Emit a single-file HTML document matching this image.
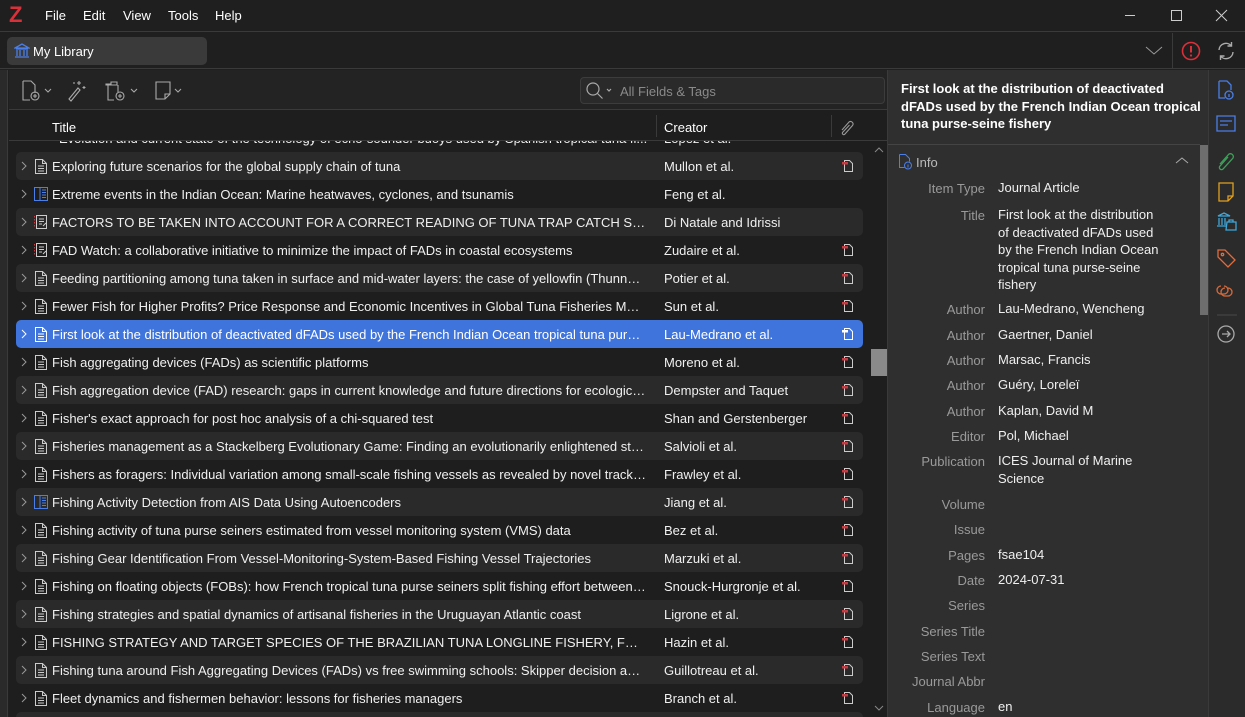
<!DOCTYPE html>
<html style="overflow:hidden;width:1245px;height:717px"><head><meta charset="utf-8"><style>
*{box-sizing:border-box;margin:0;padding:0}
body{width:1245px;height:717px;overflow:hidden;background:#1f1f1f;font-family:"Liberation Sans","DejaVu Sans",sans-serif;font-size:13px;color:#e8e8e8;position:relative}
.abs{position:absolute}
.menu span{position:absolute;top:8px;font-size:13px;color:#fff}
.row{position:absolute;left:16px;width:847px;height:28px;border-radius:5px}
.row.alt{background:#2a2a2a}
.row.sel{background:#3f74dc}
.row .chev{position:absolute;left:4px;top:9px}
.row .ic{position:absolute;left:17px;top:6px}
.row .t{position:absolute;left:36px;top:7px;width:594px;white-space:nowrap;overflow:hidden;text-overflow:ellipsis;color:#f0f0f0}
.row .c{position:absolute;left:648px;top:7px;white-space:nowrap;color:#f0f0f0}
.row .a{position:absolute;left:825px;top:7px}
.lab{position:absolute;right:260px;color:#9a9a9a;text-align:right;white-space:nowrap}
.val{position:absolute;left:998px;color:#f0f0f0;white-space:nowrap;line-height:17.5px}
</style></head><body>
<!-- title bar -->
<div class="abs" style="left:0;top:0;width:1245px;height:32px;background:#1f1f1f;border-bottom:1px solid #3a3a3a"></div>
<div class="abs" style="left:9px;top:2px;font-size:22px;font-weight:bold;color:#d9303a">Z</div>
<div class="menu"><span style="left:45px">File</span><span style="left:83px">Edit</span><span style="left:123px">View</span><span style="left:168px">Tools</span><span style="left:215px">Help</span></div>
<svg class="abs" style="left:1120px;top:8px" width="110" height="16"><line x1="5" y1="7.5" x2="15" y2="7.5" stroke="#ccc"/><rect x="51.5" y="2.5" width="10" height="10" fill="none" stroke="#ccc"/><path d="M96 2l11 11M107 2l-11 11" stroke="#ccc"/></svg>
<!-- library bar -->
<div class="abs" style="left:0;top:33px;width:1245px;height:36px;background:#1f1f1f;border-bottom:1px solid #3a3a3a"></div>
<div class="abs" style="left:7px;top:37px;width:200px;height:28px;background:#3a3a3a;border-radius:5px"></div>
<svg class="abs" style="left:14px;top:43px" width="16" height="16"><path d="M1 5L8 1l7 4zM2 6h12M3 7v6M6 7v6M10 7v6M13 7v6M1 14h14" stroke="#4a7ee8" fill="none" stroke-width="1.3"/></svg>
<div class="abs" style="left:33px;top:44px;color:#fff">My Library</div>
<svg class="abs" style="left:1145px;top:45px" width="18" height="12"><path d="M1 2l8 7 8-7" stroke="#999" fill="none"/></svg>
<div class="abs" style="left:1172px;top:33px;width:1px;height:36px;background:#3a3a3a"></div>
<svg class="abs" style="left:1180px;top:40px" width="22" height="22"><circle cx="11" cy="11" r="8.5" stroke="#d9303a" stroke-width="1.6" fill="none"/><line x1="11" y1="6" x2="11" y2="12.5" stroke="#d9303a" stroke-width="2"/><circle cx="11" cy="15.5" r="1.1" fill="#d9303a"/></svg>
<svg class="abs" style="left:1216px;top:41px" width="20" height="20"><path d="M3 9a7 7 0 0 1 12.5-4M17 11a7 7 0 0 1-12.5 4M15.5 1v4h-4M4.5 19v-4h4" stroke="#aaa" fill="none" stroke-width="1.4"/></svg>
<!-- left strip -->
<div class="abs" style="left:0;top:70px;width:8px;height:647px;background:#2a2a2a;border-right:1px solid #3a3a3a"></div>
<!-- list panel -->
<div class="abs" style="left:9px;top:70px;width:878px;height:647px;background:#1e1e1e"></div>
<div class="abs" style="left:9px;top:70px;width:878px;height:40px;background:#232323;border-bottom:1px solid #3a3a3a"></div>
<svg class="abs" style="left:20px;top:79px" width="170" height="24" fill="none" stroke="#aaa" stroke-width="1.1">
<path d="M3 2h8l4 4v8M3 2v19h7"/><circle cx="15" cy="17" r="4"/><path d="M15 15v4M13 17h4"/><path d="M25 10l3 3 3-3"/>
<path d="M49 20l9-11 2 2-9 11zM59 2v4M57 4h4M64 7v3M62.5 8.5h3M54 3v2"/>
<path d="M86 5h5v-2h6v3h-11zM88 6v15h6M98 6v7"/><circle cx="100" cy="17" r="4"/><path d="M100 15v4M98 17h4"/><path d="M111 10l3 3 3-3"/>
<path d="M136 3h14v12l-5 5h-9zM145 20v-5h5"/><path d="M155 10l3 3 3-3"/></svg>
<div class="abs" style="left:580px;top:77px;width:305px;height:27px;background:#2a2a2a;border:1px solid #3c3c3c;border-radius:4px"></div>
<svg class="abs" style="left:585px;top:81px" width="30" height="20" fill="none" stroke="#aaa" stroke-width="1.2"><circle cx="8" cy="8" r="6"/><path d="M12.5 12.5l5 5M22 8l2 2 2-2"/></svg>
<div class="abs" style="left:620px;top:84px;color:#8a8a8a">All Fields &amp; Tags</div>
<!-- header -->
<div class="abs" style="left:9px;top:111px;width:878px;height:30px;background:#1e1e1e;border-bottom:1px solid #3a3a3a"></div>
<div class="abs" style="left:52px;top:120px;color:#fff">Title</div>
<div class="abs" style="left:656px;top:115px;width:1px;height:22px;background:#3a3a3a"></div>
<div class="abs" style="left:664px;top:120px;color:#fff">Creator</div>
<div class="abs" style="left:831px;top:115px;width:1px;height:22px;background:#3a3a3a"></div>
<svg class="abs" style="left:838px;top:118px" width="18" height="18"><path d="M4 12l7-8a2.5 2.5 0 0 1 3.5 3.5l-8 9a1.5 1.5 0 0 1-2-2l7-7.5" stroke="#999" fill="none" stroke-width="1.1"/></svg>
<!-- list rows -->
<div class="abs" style="left:9px;top:141px;width:861px;height:576px;overflow:hidden">
<div style="position:absolute;left:0;top:-17px;width:861px">
<div class="row" style="top:0;left:7px"><div class="t" style="left:43px;top:7px">Evolution and current state of the technology of echo-sounder buoys used by Spanish tropical tuna fi...</div><div class="c">López et al.</div></div>
</div>
</div>
<div class="abs" style="left:0;top:0;width:1245px;height:717px;overflow:hidden">
<div class="row alt" style="top:152px"><svg class="chev" width="8" height="10"><path d="M2 1l4 4-4 4" stroke="#999" fill="none"/></svg><svg class="ic" width="16" height="16"><path d="M2.5 1.5h7l4 4v10h-11zM9.5 1.5v4h4M5 8h6M5 10.5h6M5 13h6" stroke="#ccc" fill="none"/></svg><div class="t">Exploring future scenarios for the global supply chain of tuna</div><div class="c">Mullon et al.</div><svg class="a" width="14" height="14"><path d="M3.5 1.5h5l3 3v8h-8z" stroke="#ccc" fill="none"/><rect x="1" y="3" width="6" height="2.5" fill="#c73a42"/></svg></div>
<div class="row" style="top:180px"><svg class="chev" width="8" height="10"><path d="M2 1l4 4-4 4" stroke="#999" fill="none"/></svg><svg class="ic" width="16" height="16"><path d="M1.5 1.5h13v13h-13zM7 1.5v13M9 4h4M9 6.5h4M9 9h4M9 11.5h4" stroke="#4a7ee8" fill="none"/></svg><div class="t">Extreme events in the Indian Ocean: Marine heatwaves, cyclones, and tsunamis</div><div class="c">Feng et al.</div></div>
<div class="row alt" style="top:208px"><svg class="chev" width="8" height="10"><path d="M2 1l4 4-4 4" stroke="#999" fill="none"/></svg><svg class="ic" width="16" height="16"><path d="M3.5 1.5h10v13h-10zM6 5h5M6 7.5h5M6 10h3M10 12l3-3" stroke="#ccc" fill="none"/><path d="M1.5 2v12" stroke="#c73a42" stroke-dasharray="1.5 1.5"/></svg><div class="t">FACTORS TO BE TAKEN INTO ACCOUNT FOR A CORRECT READING OF TUNA TRAP CATCH SERIES</div><div class="c">Di Natale and Idrissi</div></div>
<div class="row" style="top:236px"><svg class="chev" width="8" height="10"><path d="M2 1l4 4-4 4" stroke="#999" fill="none"/></svg><svg class="ic" width="16" height="16"><path d="M3.5 1.5h10v13h-10zM6 5h5M6 7.5h5M6 10h3M10 12l3-3" stroke="#ccc" fill="none"/><path d="M1.5 2v12" stroke="#c73a42" stroke-dasharray="1.5 1.5"/></svg><div class="t">FAD Watch: a collaborative initiative to minimize the impact of FADs in coastal ecosystems</div><div class="c">Zudaire et al.</div><svg class="a" width="14" height="14"><path d="M3.5 1.5h5l3 3v8h-8z" stroke="#ccc" fill="none"/><rect x="1" y="3" width="6" height="2.5" fill="#c73a42"/></svg></div>
<div class="row alt" style="top:264px"><svg class="chev" width="8" height="10"><path d="M2 1l4 4-4 4" stroke="#999" fill="none"/></svg><svg class="ic" width="16" height="16"><path d="M2.5 1.5h7l4 4v10h-11zM9.5 1.5v4h4M5 8h6M5 10.5h6M5 13h6" stroke="#ccc" fill="none"/></svg><div class="t">Feeding partitioning among tuna taken in surface and mid-water layers: the case of yellowfin (Thunnus albacares)</div><div class="c">Potier et al.</div><svg class="a" width="14" height="14"><path d="M3.5 1.5h5l3 3v8h-8z" stroke="#ccc" fill="none"/><rect x="1" y="3" width="6" height="2.5" fill="#c73a42"/></svg></div>
<div class="row" style="top:292px"><svg class="chev" width="8" height="10"><path d="M2 1l4 4-4 4" stroke="#999" fill="none"/></svg><svg class="ic" width="16" height="16"><path d="M2.5 1.5h7l4 4v10h-11zM9.5 1.5v4h4M5 8h6M5 10.5h6M5 13h6" stroke="#ccc" fill="none"/></svg><div class="t">Fewer Fish for Higher Profits? Price Response and Economic Incentives in Global Tuna Fisheries Management</div><div class="c">Sun et al.</div><svg class="a" width="14" height="14"><path d="M3.5 1.5h5l3 3v8h-8z" stroke="#ccc" fill="none"/><rect x="1" y="3" width="6" height="2.5" fill="#c73a42"/></svg></div>
<div class="row sel" style="top:320px"><svg class="chev" width="8" height="10"><path d="M2 1l4 4-4 4" stroke="#fff" fill="none"/></svg><svg class="ic" width="16" height="16"><path d="M2.5 1.5h7l4 4v10h-11zM9.5 1.5v4h4M5 8h6M5 10.5h6M5 13h6" stroke="#fff" fill="none"/></svg><div class="t" style="color:#fff">First look at the distribution of deactivated dFADs used by the French Indian Ocean tropical tuna purse-seine fishery</div><div class="c" style="color:#fff">Lau-Medrano et al.</div><svg class="a" width="14" height="14"><path d="M3.5 1.5h5l3 3v8h-8z" stroke="#fff" fill="none"/><rect x="1" y="3" width="6" height="2.5" fill="#fff"/></svg></div>
<div class="row" style="top:348px"><svg class="chev" width="8" height="10"><path d="M2 1l4 4-4 4" stroke="#999" fill="none"/></svg><svg class="ic" width="16" height="16"><path d="M2.5 1.5h7l4 4v10h-11zM9.5 1.5v4h4M5 8h6M5 10.5h6M5 13h6" stroke="#ccc" fill="none"/></svg><div class="t">Fish aggregating devices (FADs) as scientific platforms</div><div class="c">Moreno et al.</div><svg class="a" width="14" height="14"><path d="M3.5 1.5h5l3 3v8h-8z" stroke="#ccc" fill="none"/><rect x="1" y="3" width="6" height="2.5" fill="#c73a42"/></svg></div>
<div class="row alt" style="top:376px"><svg class="chev" width="8" height="10"><path d="M2 1l4 4-4 4" stroke="#999" fill="none"/></svg><svg class="ic" width="16" height="16"><path d="M2.5 1.5h7l4 4v10h-11zM9.5 1.5v4h4M5 8h6M5 10.5h6M5 13h6" stroke="#ccc" fill="none"/></svg><div class="t">Fish aggregation device (FAD) research: gaps in current knowledge and future directions for ecological studies</div><div class="c">Dempster and Taquet</div><svg class="a" width="14" height="14"><path d="M3.5 1.5h5l3 3v8h-8z" stroke="#ccc" fill="none"/><rect x="1" y="3" width="6" height="2.5" fill="#c73a42"/></svg></div>
<div class="row" style="top:404px"><svg class="chev" width="8" height="10"><path d="M2 1l4 4-4 4" stroke="#999" fill="none"/></svg><svg class="ic" width="16" height="16"><path d="M2.5 1.5h7l4 4v10h-11zM9.5 1.5v4h4M5 8h6M5 10.5h6M5 13h6" stroke="#ccc" fill="none"/></svg><div class="t">Fisher's exact approach for post hoc analysis of a chi-squared test</div><div class="c">Shan and Gerstenberger</div><svg class="a" width="14" height="14"><path d="M3.5 1.5h5l3 3v8h-8z" stroke="#ccc" fill="none"/><rect x="1" y="3" width="6" height="2.5" fill="#c73a42"/></svg></div>
<div class="row alt" style="top:432px"><svg class="chev" width="8" height="10"><path d="M2 1l4 4-4 4" stroke="#999" fill="none"/></svg><svg class="ic" width="16" height="16"><path d="M2.5 1.5h7l4 4v10h-11zM9.5 1.5v4h4M5 8h6M5 10.5h6M5 13h6" stroke="#ccc" fill="none"/></svg><div class="t">Fisheries management as a Stackelberg Evolutionary Game: Finding an evolutionarily enlightened strategy</div><div class="c">Salvioli et al.</div><svg class="a" width="14" height="14"><path d="M3.5 1.5h5l3 3v8h-8z" stroke="#ccc" fill="none"/><rect x="1" y="3" width="6" height="2.5" fill="#c73a42"/></svg></div>
<div class="row" style="top:460px"><svg class="chev" width="8" height="10"><path d="M2 1l4 4-4 4" stroke="#999" fill="none"/></svg><svg class="ic" width="16" height="16"><path d="M2.5 1.5h7l4 4v10h-11zM9.5 1.5v4h4M5 8h6M5 10.5h6M5 13h6" stroke="#ccc" fill="none"/></svg><div class="t">Fishers as foragers: Individual variation among small-scale fishing vessels as revealed by novel tracking</div><div class="c">Frawley et al.</div><svg class="a" width="14" height="14"><path d="M3.5 1.5h5l3 3v8h-8z" stroke="#ccc" fill="none"/><rect x="1" y="3" width="6" height="2.5" fill="#c73a42"/></svg></div>
<div class="row alt" style="top:488px"><svg class="chev" width="8" height="10"><path d="M2 1l4 4-4 4" stroke="#999" fill="none"/></svg><svg class="ic" width="16" height="16"><path d="M1.5 1.5h13v13h-13zM7 1.5v13M9 4h4M9 6.5h4M9 9h4M9 11.5h4" stroke="#4a7ee8" fill="none"/></svg><div class="t">Fishing Activity Detection from AIS Data Using Autoencoders</div><div class="c">Jiang et al.</div><svg class="a" width="14" height="14"><path d="M3.5 1.5h5l3 3v8h-8z" stroke="#ccc" fill="none"/><rect x="1" y="3" width="6" height="2.5" fill="#c73a42"/></svg></div>
<div class="row" style="top:516px"><svg class="chev" width="8" height="10"><path d="M2 1l4 4-4 4" stroke="#999" fill="none"/></svg><svg class="ic" width="16" height="16"><path d="M2.5 1.5h7l4 4v10h-11zM9.5 1.5v4h4M5 8h6M5 10.5h6M5 13h6" stroke="#ccc" fill="none"/></svg><div class="t">Fishing activity of tuna purse seiners estimated from vessel monitoring system (VMS) data</div><div class="c">Bez et al.</div><svg class="a" width="14" height="14"><path d="M3.5 1.5h5l3 3v8h-8z" stroke="#ccc" fill="none"/><rect x="1" y="3" width="6" height="2.5" fill="#c73a42"/></svg></div>
<div class="row alt" style="top:544px"><svg class="chev" width="8" height="10"><path d="M2 1l4 4-4 4" stroke="#999" fill="none"/></svg><svg class="ic" width="16" height="16"><path d="M2.5 1.5h7l4 4v10h-11zM9.5 1.5v4h4M5 8h6M5 10.5h6M5 13h6" stroke="#ccc" fill="none"/></svg><div class="t">Fishing Gear Identification From Vessel-Monitoring-System-Based Fishing Vessel Trajectories</div><div class="c">Marzuki et al.</div><svg class="a" width="14" height="14"><path d="M3.5 1.5h5l3 3v8h-8z" stroke="#ccc" fill="none"/><rect x="1" y="3" width="6" height="2.5" fill="#c73a42"/></svg></div>
<div class="row" style="top:572px"><svg class="chev" width="8" height="10"><path d="M2 1l4 4-4 4" stroke="#999" fill="none"/></svg><svg class="ic" width="16" height="16"><path d="M2.5 1.5h7l4 4v10h-11zM9.5 1.5v4h4M5 8h6M5 10.5h6M5 13h6" stroke="#ccc" fill="none"/></svg><div class="t">Fishing on floating objects (FOBs): how French tropical tuna purse seiners split fishing effort between FOBs and free schools</div><div class="c">Snouck-Hurgronje et al.</div><svg class="a" width="14" height="14"><path d="M3.5 1.5h5l3 3v8h-8z" stroke="#ccc" fill="none"/><rect x="1" y="3" width="6" height="2.5" fill="#c73a42"/></svg></div>
<div class="row alt" style="top:600px"><svg class="chev" width="8" height="10"><path d="M2 1l4 4-4 4" stroke="#999" fill="none"/></svg><svg class="ic" width="16" height="16"><path d="M2.5 1.5h7l4 4v10h-11zM9.5 1.5v4h4M5 8h6M5 10.5h6M5 13h6" stroke="#ccc" fill="none"/></svg><div class="t">Fishing strategies and spatial dynamics of artisanal fisheries in the Uruguayan Atlantic coast</div><div class="c">Ligrone et al.</div><svg class="a" width="14" height="14"><path d="M3.5 1.5h5l3 3v8h-8z" stroke="#ccc" fill="none"/><rect x="1" y="3" width="6" height="2.5" fill="#c73a42"/></svg></div>
<div class="row" style="top:628px"><svg class="chev" width="8" height="10"><path d="M2 1l4 4-4 4" stroke="#999" fill="none"/></svg><svg class="ic" width="16" height="16"><path d="M2.5 1.5h7l4 4v10h-11zM9.5 1.5v4h4M5 8h6M5 10.5h6M5 13h6" stroke="#ccc" fill="none"/></svg><div class="t">FISHING STRATEGY AND TARGET SPECIES OF THE BRAZILIAN TUNA LONGLINE FISHERY, FROM 1978 TO 2012</div><div class="c">Hazin et al.</div><svg class="a" width="14" height="14"><path d="M3.5 1.5h5l3 3v8h-8z" stroke="#ccc" fill="none"/><rect x="1" y="3" width="6" height="2.5" fill="#c73a42"/></svg></div>
<div class="row alt" style="top:656px"><svg class="chev" width="8" height="10"><path d="M2 1l4 4-4 4" stroke="#999" fill="none"/></svg><svg class="ic" width="16" height="16"><path d="M2.5 1.5h7l4 4v10h-11zM9.5 1.5v4h4M5 8h6M5 10.5h6M5 13h6" stroke="#ccc" fill="none"/></svg><div class="t">Fishing tuna around Fish Aggregating Devices (FADs) vs free swimming schools: Skipper decision and other factors</div><div class="c">Guillotreau et al.</div><svg class="a" width="14" height="14"><path d="M3.5 1.5h5l3 3v8h-8z" stroke="#ccc" fill="none"/><rect x="1" y="3" width="6" height="2.5" fill="#c73a42"/></svg></div>
<div class="row" style="top:684px"><svg class="chev" width="8" height="10"><path d="M2 1l4 4-4 4" stroke="#999" fill="none"/></svg><svg class="ic" width="16" height="16"><path d="M2.5 1.5h7l4 4v10h-11zM9.5 1.5v4h4M5 8h6M5 10.5h6M5 13h6" stroke="#ccc" fill="none"/></svg><div class="t">Fleet dynamics and fishermen behavior: lessons for fisheries managers</div><div class="c">Branch et al.</div><svg class="a" width="14" height="14"><path d="M3.5 1.5h5l3 3v8h-8z" stroke="#ccc" fill="none"/><rect x="1" y="3" width="6" height="2.5" fill="#c73a42"/></svg></div>
<div class="row alt" style="top:712px;height:5px;border-radius:5px 5px 0 0"></div>
</div>
<!-- list scrollbar -->
<div class="abs" style="left:870px;top:141px;width:17px;height:576px;background:#1e1e1e"></div>
<svg class="abs" style="left:873px;top:146px" width="12" height="8"><path d="M2 6l4-4 4 4" stroke="#888" fill="none"/></svg>
<svg class="abs" style="left:873px;top:704px" width="12" height="8"><path d="M2 2l4 4 4-4" stroke="#888" fill="none"/></svg>
<div class="abs" style="left:871px;top:349px;width:17px;height:27px;background:#8a8a8a"></div>
<!-- item pane -->
<div class="abs" style="left:887px;top:70px;width:1px;height:647px;background:#3a3a3a"></div>
<div class="abs" style="left:888px;top:70px;width:320px;height:647px;background:#2f2f2f"></div>
<div class="abs" style="left:901px;top:80px;width:300px;color:#fff;font-weight:bold;line-height:17.5px;font-size:13px">First look at the distribution of deactivated dFADs used by the French Indian Ocean tropical tuna purse-seine fishery</div>
<div class="abs" style="left:888px;top:144px;width:312px;height:1px;background:#444"></div>
<svg class="abs" style="left:897px;top:153px" width="16" height="17"><path d="M2.5 1.5h6l4 4v3M2.5 1.5v13h5" stroke="#4a7ee8" fill="none"/><circle cx="11" cy="12.5" r="3.5" stroke="#4a7ee8" fill="none"/><path d="M11 11.5v3" stroke="#4a7ee8"/></svg>
<div class="abs" style="left:916px;top:155px;color:#bbb">Info</div>
<svg class="abs" style="left:1174px;top:156px" width="16" height="10"><path d="M2 7l6-5 6 5" stroke="#aaa" fill="none"/></svg>
<div class="abs" style="left:1199px;top:145px;width:9px;height:572px;background:#2f2f2f"></div>
<div class="abs" style="left:1200px;top:145px;width:8px;height:170px;background:#6e6e6e"></div>
<div class="lab" style="top:181px">Item Type</div><div class="val" style="top:179px">Journal Article</div>
<div class="lab" style="top:208px">Title</div><div class="val" style="top:206px;white-space:normal;width:168px">First look at the distribution of deactivated dFADs used by the French Indian Ocean tropical tuna purse-seine fishery</div>
<div class="lab" style="top:302px">Author</div><div class="val" style="top:300px">Lau-Medrano, Wencheng</div>
<div class="lab" style="top:328px">Author</div><div class="val" style="top:326px">Gaertner, Daniel</div>
<div class="lab" style="top:353px">Author</div><div class="val" style="top:351px">Marsac, Francis</div>
<div class="lab" style="top:378px">Author</div><div class="val" style="top:376px">Guéry, Loreleï</div>
<div class="lab" style="top:404px">Author</div><div class="val" style="top:402px">Kaplan, David M</div>
<div class="lab" style="top:429px">Editor</div><div class="val" style="top:427px">Pol, Michael</div>
<div class="lab" style="top:454px">Publication</div><div class="val" style="top:452px">ICES Journal of Marine<br>Science</div>
<div class="lab" style="top:497px">Volume</div>
<div class="lab" style="top:522px">Issue</div>
<div class="lab" style="top:548px">Pages</div><div class="val" style="top:546px">fsae104</div>
<div class="lab" style="top:573px">Date</div><div class="val" style="top:571px">2024-07-31</div>
<div class="lab" style="top:598px">Series</div>
<div class="lab" style="top:624px">Series Title</div>
<div class="lab" style="top:649px">Series Text</div>
<div class="lab" style="top:674px">Journal Abbr</div>
<div class="lab" style="top:700px">Language</div><div class="val" style="top:698px">en</div>
<!-- side nav -->
<div class="abs" style="left:1208px;top:70px;width:1px;height:647px;background:#3a3a3a"></div>
<div class="abs" style="left:1209px;top:70px;width:36px;height:647px;background:#2b2b2b"></div>
<svg class="abs" style="left:1214px;top:78px" width="26" height="280" fill="none" stroke-width="1.3">
<path d="M5 3h8l4 4v5M5 3v17h6" stroke="#4a7ee8"/><circle cx="15" cy="17" r="4" stroke="#4a7ee8"/><path d="M15 16v3" stroke="#4a7ee8"/>
<path d="M3 38h18v15h-18zM6 43h12M6 47h8" stroke="#4a7ee8"/>
<path d="M6 86l9-10a3 3 0 0 1 4 4l-10 11a2 2 0 0 1-3-3l8-9" stroke="#3ea05a"/>
<path d="M5 105h14v13l-5 5h-9zM14 123v-5h5" stroke="#e0a020"/>
<path d="M4 138l6-3 6 3zM5 140v7M8 140v7M11 140v7M3 148h10M13 144h9v8h-10zM15 144v-2h4v2" stroke="#3fa6d8"/>
<path d="M4 172v7l10 10 7-7-10-10z" stroke="#e46a3a"/><circle cx="8.5" cy="176.5" r="1.2" stroke="#e46a3a"/>
<path d="M10 208a4 4 0 1 1 0 8h-3a4 4 0 0 1 0-8M14 210a4 4 0 1 1 0 8h-3a4 4 0 0 1 0-8" stroke="#d86a3a"/>
<path d="M3 237h20" stroke="#444"/>
<circle cx="12" cy="256" r="8" stroke="#aaa"/><path d="M8 256h8M13 253l3 3-3 3" stroke="#aaa"/>
</svg>
</body></html>
